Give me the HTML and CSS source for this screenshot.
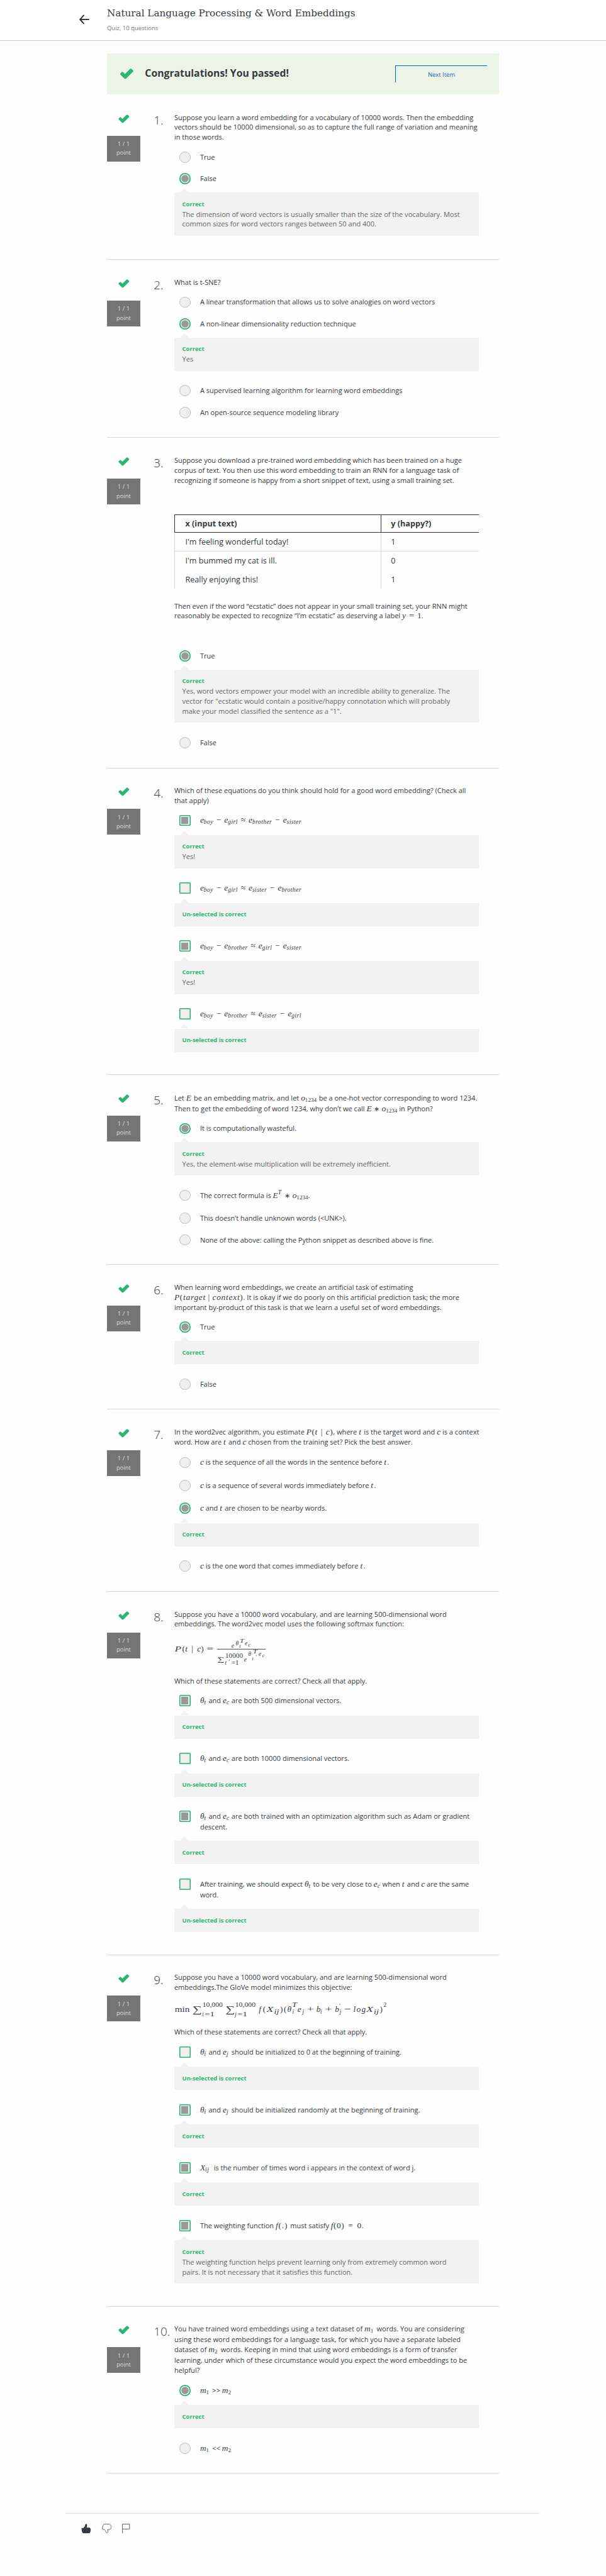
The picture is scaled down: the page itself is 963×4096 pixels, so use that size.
FILE: index.html
```
<!DOCTYPE html>
<html lang="en">
<head>
<meta charset="utf-8">
<title>Natural Language Processing &amp; Word Embeddings</title>
<link rel="stylesheet" href="styles.css">
</head>
<body>
<svg class="defs" aria-hidden="true">
  <symbol id="check" viewBox="0 0 23 18"><path d="M.8 8.3 3 6.1Q4.200 5 5.500 6.100L8.400 9.200 16.800.9Q18.200-.3 19.600.9L22 3Q23 4.200 22 5.400L10.600 16.800Q9 18.300 7.400 16.800L.8 10.300Q0 9.300.8 8.300Z" fill="#2bb673"/></symbol>
</svg>

<header class="top">
  <svg class="back" viewBox="0 0 20 20"><path d="M9.500 1.200 1.500 10l8 8.800M1.500 10H20" fill="none" stroke="#222" stroke-width="2.200"/></svg>
  <div>
    <h1>Natural Language Processing &amp; Word Embeddings</h1>
    <p>Quiz, 10 questions</p>
  </div>
</header>

<main>
  <div class="banner">
    <svg class="tick"><use href="#check"/></svg>
    <h2>Congratulations! You passed!</h2>
    <a class="next">Next Item</a>
  </div>

  <section class="q q1">
    <div class="score"><svg class="tick"><use href="#check"/></svg><div class="pts">1 / 1<br>point</div></div>
    <div class="num">1.</div>
    <div class="body">
      <p>Suppose you learn a word embedding for a vocabulary of 10000 words. Then the embedding<br>vectors should be 10000 dimensional, so as to capture the full range of variation and meaning<br>in those words.</p>
      <div class="opt"><span class="radio"></span><label>True</label></div>
      <div class="opt"><span class="radio on"></span><label>False</label></div>
      <div class="fb"><b>Correct</b><p>The dimension of word vectors is usually smaller than the size of the vocabulary. Most<br>common sizes for word vectors ranges between 50 and 400.</p></div>
    </div>
  </section>

  <section class="q q2">
    <div class="score"><svg class="tick"><use href="#check"/></svg><div class="pts">1 / 1<br>point</div></div>
    <div class="num">2.</div>
    <div class="body">
      <p>What is t-SNE?</p>
      <div class="opt"><span class="radio"></span><label>A linear transformation that allows us to solve analogies on word vectors</label></div>
      <div class="opt"><span class="radio on"></span><label>A non-linear dimensionality reduction technique</label></div>
      <div class="fb"><b>Correct</b><p>Yes</p></div>
      <div class="opt"><span class="radio"></span><label>A supervised learning algorithm for learning word embeddings</label></div>
      <div class="opt"><span class="radio"></span><label>An open-source sequence modeling library</label></div>
    </div>
  </section>

  <section class="q q3">
    <div class="score"><svg class="tick"><use href="#check"/></svg><div class="pts">1 / 1<br>point</div></div>
    <div class="num">3.</div>
    <div class="body">
      <p>Suppose you download a pre-trained word embedding which has been trained on a huge<br>corpus of text. You then use this word embedding to train an RNN for a language task of<br>recognizing if someone is happy from a short snippet of text, using a small training set.</p>
      <div class="table">
        <div class="tr th"><span>x (input text)</span><span>y (happy?)</span></div>
        <div class="tr line"><span>I'm feeling wonderful today!</span><span>1</span></div>
        <div class="tr"><span>I'm bummed my cat is ill.</span><span>0</span></div>
        <div class="tr"><span>Really enjoying this!</span><span>1</span></div>
      </div>
      <p class="after">Then even if the word “ecstatic” does not appear in your small training set, your RNN might<br>reasonably be expected to recognize “I’m ecstatic” as deserving a label <span class="m expr label-eq"><i>y</i> = <span>1</span></span>.</p>
      <div class="opt"><span class="radio on"></span><label>True</label></div>
      <div class="fb"><b>Correct</b><p>Yes, word vectors empower your model with an incredible ability to generalize. The<br>vector for "ecstatic would contain a positive/happy connotation which will probably<br>make your model classified the sentence as a "1".</p></div>
      <div class="opt"><span class="radio"></span><label>False</label></div>
    </div>
  </section>

  <section class="q q4">
    <div class="score"><svg class="tick"><use href="#check"/></svg><div class="pts">1 / 1<br>point</div></div>
    <div class="num">4.</div>
    <div class="body">
      <p>Which of these equations do you think should hold for a good word embedding? (Check all<br>that apply)</p>
      <div class="opt tall"><span class="box on"></span><label><span class="m expr analogy"><i>e<sub>boy</sub></i> − <i>e<sub>girl</sub></i> ≈ <i>e<sub>brother</sub></i> − <i>e<sub>sister</sub></i></span></label></div>
      <div class="fb"><b>Correct</b><p>Yes!</p></div>
      <div class="opt tall"><span class="box"></span><label><span class="m expr analogy"><i>e<sub>boy</sub></i> − <i>e<sub>girl</sub></i> ≈ <i>e<sub>sister</sub></i> − <i>e<sub>brother</sub></i></span></label></div>
      <div class="fb"><b>Un-selected is correct</b></div>
      <div class="opt tall"><span class="box on"></span><label><span class="m expr analogy"><i>e<sub>boy</sub></i> − <i>e<sub>brother</sub></i> ≈ <i>e<sub>girl</sub></i> − <i>e<sub>sister</sub></i></span></label></div>
      <div class="fb"><b>Correct</b><p>Yes!</p></div>
      <div class="opt tall"><span class="box"></span><label><span class="m expr analogy"><i>e<sub>boy</sub></i> − <i>e<sub>brother</sub></i> ≈ <i>e<sub>sister</sub></i> − <i>e<sub>girl</sub></i></span></label></div>
      <div class="fb"><b>Un-selected is correct</b></div>
    </div>
  </section>

  <section class="q q5">
    <div class="score"><svg class="tick"><use href="#check"/></svg><div class="pts">1 / 1<br>point</div></div>
    <div class="num">5.</div>
    <div class="body">
      <p>Let <span class="m expr mat"><i>E</i></span> be an embedding matrix, and let <span class="m expr onehot"><i>o<sub class="n">1234</sub></i></span> be a one-hot vector corresponding to word 1234.<br>Then to get the embedding of word 1234, why don’t we call <span class="m expr prod"><i>E</i> <span class="ast">∗</span> <i>o<sub class="n">1234</sub></i></span> in Python?</p>
      <div class="opt"><span class="radio on"></span><label>It is computationally wasteful.</label></div>
      <div class="fb"><b>Correct</b><p>Yes, the element-wise multiplication will be extremely inefficient.</p></div>
      <div class="opt tall"><span class="radio"></span><label>The correct formula is <span class="m expr tprod"><i>E<sup>T</sup></i> <span class="ast">∗</span> <i>o<sub class="n">1234</sub></i></span>.</label></div>
      <div class="opt"><span class="radio"></span><label>This doesn’t handle unknown words (&lt;UNK&gt;).</label></div>
      <div class="opt"><span class="radio"></span><label>None of the above: calling the Python snippet as described above is fine.</label></div>
    </div>
  </section>

  <section class="q q6">
    <div class="score"><svg class="tick"><use href="#check"/></svg><div class="pts">1 / 1<br>point</div></div>
    <div class="num">6.</div>
    <div class="body">
      <p>When learning word embeddings, we create an artificial task of estimating<br><span class="m expr ptc"><span><i>P</i>(<i>target</i></span><span>|</span><span><i>context</i>)</span></span>. It is okay if we do poorly on this artificial prediction task; the more<br>important by-product of this task is that we learn a useful set of word embeddings.</p>
      <div class="opt"><span class="radio on"></span><label>True</label></div>
      <div class="fb"><b>Correct</b></div>
      <div class="opt"><span class="radio"></span><label>False</label></div>
    </div>
  </section>

  <section class="q q7">
    <div class="score"><svg class="tick"><use href="#check"/></svg><div class="pts">1 / 1<br>point</div></div>
    <div class="num">7.</div>
    <div class="body">
      <p>In the word2vec algorithm, you estimate <span class="m expr pt"><span><i>P</i>(<i>t</i></span><span>|</span><span><i>c</i>)</span></span>, where <span class="m expr t"><i>t</i></span> is the target word and <span class="m expr c"><i>c</i></span> is a context<br>word. How are <span class="m expr t"><i>t</i></span> and <span class="m expr c"><i>c</i></span> chosen from the training set? Pick the best answer.</p>
      <div class="opt tall"><span class="radio"></span><label><span class="m expr c"><i>c</i></span> is the sequence of all the words in the sentence before <span class="m expr t"><i>t</i></span>.</label></div>
      <div class="opt tall"><span class="radio"></span><label><span class="m expr c"><i>c</i></span> is a sequence of several words immediately before <span class="m expr t"><i>t</i></span>.</label></div>
      <div class="opt tall"><span class="radio on"></span><label><span class="m expr c"><i>c</i></span> and <span class="m expr t"><i>t</i></span> are chosen to be nearby words.</label></div>
      <div class="fb"><b>Correct</b></div>
      <div class="opt"><span class="radio"></span><label><span class="m expr c"><i>c</i></span> is the one word that comes immediately before <span class="m expr t"><i>t</i></span>.</label></div>
    </div>
  </section>

  <section class="q q8">
    <div class="score"><svg class="tick"><use href="#check"/></svg><div class="pts">1 / 1<br>point</div></div>
    <div class="num">8.</div>
    <div class="body">
      <p>Suppose you have a 10000 word vocabulary, and are learning 500-dimensional word<br>embeddings. The word2vec model uses the following softmax function:</p>
      <svg class="formula softmax" viewBox="0 0 614 75">
        <g class="it">
          <text x="1" y="38.300" textLength="13" lengthAdjust="spacingAndGlyphs">P</text>
          <text x="22" y="38.300">t</text><text x="46" y="38.300">c</text>
        </g>
        <text x="16" y="38.300">(</text><text x="34.500" y="38.300">|</text><text x="53.500" y="38.300">)</text>
        <text x="65" y="38.300" textLength="14" lengthAdjust="spacingAndGlyphs">=</text>
        <path d="M86 33.300H184" stroke="#373a3c" stroke-width="1.200"/>
        <g class="it s1">
          <text x="115" y="31">e</text><text x="123.500" y="25">θ</text><text x="142" y="25">e</text>
          <text x="140.500" y="58">e</text><text x="149" y="46.700">θ</text><text x="170" y="47">e</text>
          <text x="102" y="64.700">t</text><text x="108.500" y="63">′</text>
        </g>
        <g class="it s2">
          <text x="131.500" y="20.700" textLength="9" lengthAdjust="spacingAndGlyphs">T</text><text x="131" y="30.500">t</text><text x="149" y="28">c</text>
          <text x="158" y="42" textLength="9" lengthAdjust="spacingAndGlyphs">T</text><text x="156.500" y="56">t</text><text x="163.500" y="53">′</text><text x="177" y="49.400">c</text>
        </g>
        <g class="s1">
          <text class="sigma-sm" x="87" y="58.500" textLength="14" lengthAdjust="spacingAndGlyphs">∑</text>
          <text x="102.700" y="51" textLength="35.500" lengthAdjust="spacingAndGlyphs">10000</text>
          <text x="115" y="64.700" textLength="15" lengthAdjust="spacingAndGlyphs">=1</text>
        </g>
      </svg>
      <p>Which of these statements are correct? Check all that apply.</p>
      <div class="opt tall"><span class="box on"></span><label><span class="m expr th"><i>θ<sub>t</sub></i></span> and <span class="m expr e"><i>e<sub>c</sub></i></span> are both 500 dimensional vectors.</label></div>
      <div class="fb"><b>Correct</b></div>
      <div class="opt tall"><span class="box"></span><label><span class="m expr th"><i>θ<sub>t</sub></i></span> and <span class="m expr e"><i>e<sub>c</sub></i></span> are both 10000 dimensional vectors.</label></div>
      <div class="fb"><b>Un-selected is correct</b></div>
      <div class="opt two"><span class="box on"></span><label><span class="m expr th"><i>θ<sub>t</sub></i></span> and <span class="m expr e"><i>e<sub>c</sub></i></span> are both trained with an optimization algorithm such as Adam or gradient<br>descent.</label></div>
      <div class="fb"><b>Correct</b></div>
      <div class="opt two"><span class="box"></span><label>After training, we should expect <span class="m expr th"><i>θ<sub>t</sub></i></span> to be very close to <span class="m expr e"><i>e<sub>c</sub></i></span> when <span class="m expr t"><i>t</i></span> and <span class="m expr c"><i>c</i></span> are the same<br>word.</label></div>
      <div class="fb"><b>Un-selected is correct</b></div>
    </div>
  </section>

  <section class="q q9">
    <div class="score"><svg class="tick"><use href="#check"/></svg><div class="pts">1 / 1<br>point</div></div>
    <div class="num">9.</div>
    <div class="body">
      <p>Suppose you have a 10000 word vocabulary, and are learning 500-dimensional word<br>embeddings.The GloVe model minimizes this objective:</p>
      <svg class="formula glove" viewBox="0 0 614 40">
        <text x=".7" y="26" textLength="30" lengthAdjust="spacingAndGlyphs">min</text>
        <text class="sigma" x="36" y="27.500" textLength="19" lengthAdjust="spacingAndGlyphs">∑</text>
        <text class="sigma" x="102.500" y="27.500" textLength="19" lengthAdjust="spacingAndGlyphs">∑</text>
        <g class="s1">
          <text x="56.500" y="16.600" textLength="41" lengthAdjust="spacingAndGlyphs">10,000</text>
          <text x="122.500" y="16.600" textLength="41" lengthAdjust="spacingAndGlyphs">10,000</text>
          <text x="61" y="35" textLength="20" lengthAdjust="spacingAndGlyphs">=1</text>
          <text x="127" y="35" textLength="20" lengthAdjust="spacingAndGlyphs">=1</text>
          <text x="421.500" y="16">2</text>
        </g>
        <g class="it s1">
          <text x="56" y="35">i</text><text x="122" y="35">j</text>
          <text x="201" y="30" textLength="10" lengthAdjust="spacingAndGlyphs">ij</text>
          <text x="237" y="16" textLength="10" lengthAdjust="spacingAndGlyphs">T</text><text x="237.500" y="30">i</text>
          <text x="258" y="30">j</text><text x="294" y="30">i</text>
          <text x="331.500" y="19">′</text><text x="333" y="30">j</text>
          <text x="402" y="30" textLength="10" lengthAdjust="spacingAndGlyphs">ij</text>
        </g>
        <g class="it">
          <text x="170" y="26">f</text>
          <text x="185.500" y="26" textLength="14" lengthAdjust="spacingAndGlyphs">X</text>
          <text x="227.500" y="26">θ</text><text x="248" y="26">e</text><text x="286" y="26">b</text><text x="323.500" y="26">b</text>
          <text x="360.500" y="26" textLength="25" lengthAdjust="spacing">log</text>
          <text x="386.500" y="26" textLength="14" lengthAdjust="spacingAndGlyphs">X</text>
        </g>
        <text x="178.500" y="26">(</text><text x="213" y="26">)</text><text x="220.500" y="26">(</text><text x="414" y="26">)</text>
        <text x="267" y="26" textLength="14" lengthAdjust="spacingAndGlyphs">+</text>
        <text x="304" y="26" textLength="14" lengthAdjust="spacingAndGlyphs">+</text>
        <text x="342" y="26" textLength="14" lengthAdjust="spacingAndGlyphs">−</text>
      </svg>
      <p>Which of these statements are correct? Check all that apply.</p>
      <div class="opt tall"><span class="box"></span><label><span class="m expr th"><i>θ<sub>i</sub></i></span> and <span class="m expr e"><i>e<sub>j</sub></i></span> should be initialized to 0 at the beginning of training.</label></div>
      <div class="fb"><b>Un-selected is correct</b></div>
      <div class="opt tall"><span class="box on"></span><label><span class="m expr th"><i>θ<sub>i</sub></i></span> and <span class="m expr e"><i>e<sub>j</sub></i></span> should be initialized randomly at the beginning of training.</label></div>
      <div class="fb"><b>Correct</b></div>
      <div class="opt tall"><span class="box on"></span><label><span class="m expr x"><i>X<sub>ij</sub></i></span> is the number of times word i appears in the context of word j.</label></div>
      <div class="fb"><b>Correct</b></div>
      <div class="opt tall"><span class="box on"></span><label>The weighting function <span class="m expr f"><span><i>f</i>(.)</span></span> must satisfy <span class="m expr f0"><span><i>f</i>(0)</span><span>=</span><span>0</span></span>.</label></div>
      <div class="fb"><b>Correct</b><p>The weighting function helps prevent learning only from extremely common word<br>pairs. It is not necessary that it satisfies this function.</p></div>
    </div>
  </section>

  <section class="q q10">
    <div class="score"><svg class="tick"><use href="#check"/></svg><div class="pts">1 / 1<br>point</div></div>
    <div class="num">10.</div>
    <div class="body">
      <p>You have trained word embeddings using a text dataset of <span class="m expr mm"><i>m<sub class="n">1</sub></i></span> words. You are considering<br>using these word embeddings for a language task, for which you have a separate labeled<br>dataset of <span class="m expr mm"><i>m<sub class="n">2</sub></i></span> words. Keeping in mind that using word embeddings is a form of transfer<br>learning, under which of these circumstance would you expect the word embeddings to be<br>helpful?</p>
      <div class="opt tall"><span class="radio on"></span><label><span class="m expr mm"><i>m<sub class="n">1</sub></i></span> &gt;&gt; <span class="m expr mm"><i>m<sub class="n">2</sub></i></span></label></div>
      <div class="fb"><b>Correct</b></div>
      <div class="opt"><span class="radio"></span><label><span class="m expr mm"><i>m<sub class="n">1</sub></i></span> &lt;&lt; <span class="m expr mm"><i>m<sub class="n">2</sub></i></span></label></div>
    </div>
  </section>
</main>

<footer>
  <svg viewBox="0 0 20 20"><path d="M.5 8.500H4.500Q8 5 8.300 1.500 8.500.3 9.800.3 12.200.5 12 3.500 12 6 11.200 7.500H16Q19 8 19.200 12 19.300 17 16 19.700H5.500Q2 19 1.500 15Z" fill="#373a42"/></svg>
  <svg viewBox="0 0 20 20"><path d="M4 .6H15Q18.500 3 19 7 19.200 10.500 15.500 11.500H11.500Q12.500 14 12 17.500L9.800 19.400Q8.500 18.500 8 16 7.500 13.500 4.500 11.500L.8 11Q.8 4 4 .6Z" fill="none" stroke="#555" stroke-width="1.100"/></svg>
  <svg viewBox="0 0 20 20"><path d="M.8 20V.6H15V10.500H.8" fill="none" stroke="#555" stroke-width="1.200"/></svg>
</footer>
</body>
</html>
```
FILE: styles.css
```
/* 1rem stands for ten design pixels */
html { font-size: 7.89px; }
body {
  margin: 0;
  background: #fefefe;
  color: #373a3c;
  font-family: "Open Sans", "Noto Sans", sans-serif;
  font-size: 1.4rem;
  line-height: 2rem;
}
h1, h2, p { margin: 0; font-weight: 400; }
p, label { white-space: nowrap; }
.defs { position: absolute; width: 0; height: 0; }

.top {
  box-sizing: border-box;
  height: 8.3rem;
  padding: 1.3rem 0 0 16rem;
  display: flex;
  gap: 3.55rem;
  background: #fff;
  border-bottom: 1px solid #ccc;
}
.top .back { width: 2rem; height: 2rem; margin-top: 1.65rem; }
.top h1 {
  font-family: "DejaVu Serif", "Liberation Serif", serif;
  font-size: 1.93rem;
  line-height: 2.8rem;
  white-space: nowrap;
}
.top p { margin-top: .65rem; font-size: 1.2rem; color: #757575; }

main { width: 79rem; margin-left: 21.5rem; padding-top: 2.45rem; }

.banner {
  box-sizing: border-box;
  height: 8.25rem;
  padding: 2.4rem 2.4rem 0 2.6rem;
  display: flex;
  background: #ebf4e7;
}
.banner .tick { width: 2.9rem; height: 2.15rem; margin-top: .65rem; }
.banner h2 { margin: .1rem auto 0 2.2rem; font-size: 2rem; font-weight: 700; line-height: 2.8rem; }
.next {
  box-sizing: border-box;
  width: 18.5rem;
  height: 3.5rem;
  border-top: 1px solid #0b5cb5;
  border-left: 1px solid #0b5cb5;
  color: #1a66b8;
  font-size: 1.2rem;
  line-height: 3.5rem;
  text-align: center;
}

.q {
  box-sizing: border-box;
  display: flex;
  padding-top: 3.5rem;
  border-bottom: 1px solid #dadada;
}
.q1 { height: 33.25rem; margin-top: .15rem; }
.q2 { height: 35.87rem; }
.q3 { height: 66.58rem; }
.q4 { height: 61.75rem; }
.q5 { height: 38.3rem; }
.q6 { height: 29.2rem; }
.q7 { height: 36.7rem; }
.q8 { height: 73.2rem; }
.q9 { height: 70.87rem; }
.q10 { height: 33.63rem; }

.score { width: 6.8rem; text-align: center; }
.score .tick { display: block; width: 2.25rem; height: 1.75rem; margin: .4rem auto 2.55rem 2.35rem; }
.pts {
  box-sizing: border-box;
  height: 5.2rem;
  padding-top: .8rem;
  background: #757575;
  color: #dcdcdc;
  font-size: 1.2rem;
  line-height: 1.8rem;
}
.num { width: 4.15rem; margin-left: 2.65rem; font-size: 2.4rem; font-weight: 300; line-height: 3.1rem; white-space: nowrap; }
.body { width: 61.4rem; }
.body > p + .opt { margin-top: .8rem; }
.q5 .body > p { line-height: 2.17rem; }
.q6 .body > p { line-height: 2.03rem; }
.q7 .body > p, .q10 .body > p { line-height: 2.08rem; }

.opt { display: flex; height: 4.4rem; }
.opt.tall { height: 4.6rem; }
.opt.two { height: 6.6rem; }
.opt label { margin-top: 1.18rem; line-height: 2.15rem; }
.radio, .box {
  box-sizing: border-box;
  flex: none;
  width: 2.25rem;
  height: 2.25rem;
  margin: 1.07rem 1.95rem 0 1rem;
  background: #efefef;
  border: 1px solid #bdbdbd;
  border-radius: 50%;
}
.radio.on {
  border: 0;
  background: radial-gradient(circle, #999 0 .68rem, #efefef .78rem);
  box-shadow: inset 0 0 0 1.800px #2bb673;
}
.box { border: 0; border-radius: .2rem; box-shadow: inset 0 0 0 1.600px #2bb673; }
.box.on { padding: .4rem; background: linear-gradient(#999, #999) content-box, #efefef; }

.fb {
  position: relative;
  margin: .57rem 0 1.8rem;
  padding: 1.45rem 1.6rem 1.35rem;
  background: #f2f2f2;
}
.fb::before {
  content: "";
  position: absolute;
  left: 1.15rem;
  top: -.9rem;
  border: .95rem solid transparent;
  border-top: 0;
  border-bottom: .95rem solid #f2f2f2;
}
.fb b { display: block; color: #2bb673; font-size: 1.2rem; line-height: 1.9rem; }
.fb p { color: #666; }

.table { margin-top: 5.85rem; border-left: 1px solid #ddd; font-size: 1.6rem; }
.tr { display: grid; grid-template-columns: 41.4rem 1fr; }
.tr span { height: 3.71rem; box-sizing: border-box; padding: .75rem 0 0 2.1rem; line-height: 2.2rem; }
.tr span + span { border-left: 1px solid #ddd; padding-left: 2rem; }
.tr.line { border-bottom: 1px solid #ddd; }
.tr.th {
  margin-left: -1px;
  border: 1px solid #333;
  border-right: 0;
  font-weight: 700;
}
.tr.th span + span { border-left-color: #333; }
.tr.th span { height: 3.5rem; padding-top: .65rem; }
.after { margin-top: 2.5rem; }
.after + .opt.opt { margin-top: 4.9rem; }

/* mathematics */
.m, .formula { font-family: "Liberation Serif", serif; font-size: 1.7rem; line-height: 0; }
.m sub, .m sup { font-size: .72em; line-height: 0; letter-spacing: .04em; }
.m sub { vertical-align: -.25em; }
.m sup { vertical-align: .6em; }
.m .n { font-style: normal; font-size: .68em; letter-spacing: 0; }
.expr { display: inline-flex; align-items: baseline; justify-content: space-between; }
.analogy { width: 20.4rem; }
.label-eq { width: 3.9rem; }
.mat { width: 1.2rem; }
.onehot { width: 3.25rem; }
.prod { width: 6.2rem; }
.tprod { width: 7.1rem; }
.ast { font-size: .8em; }
.ptc { width: 13.9rem; letter-spacing: .055em; }
.pt { width: 5.4rem; letter-spacing: .04em; }
.t { width: .65rem; }
.c { width: .75rem; }
.th.m { width: 1.35rem; }
.e { width: 1.4rem; }
.x { width: 2.4rem; }
.f { width: 2.6rem; letter-spacing: .06em; }
.f0 { width: 6.2rem; letter-spacing: .04em; }
.mm { width: 2.1rem; }

.formula { display: block; width: 61.4rem; overflow: visible; fill: #373a3c; font-size: 17px; }
.formula .it { font-style: italic; }
.formula .s1 { font-size: 12px; }
.formula .s2 { font-size: 10.500px; }
.formula .sigma { font-size: 19px; }
.formula .sigma-sm { font-size: 13px; }
.softmax { height: 7.5rem; margin: .7rem 0 1.25rem; }
.glove { height: 4rem; margin: 1.33rem 0 1.73rem; }

footer {
  box-sizing: border-box;
  width: 95.4rem;
  height: 5rem;
  margin: 7.95rem 0 0 13.2rem;
  padding: 2rem 0 0 3.2rem;
  display: flex;
  gap: 2.1rem;
  border-top: 1px solid #e1e1e1;
}
footer svg { width: 2rem; height: 2rem; }
```
